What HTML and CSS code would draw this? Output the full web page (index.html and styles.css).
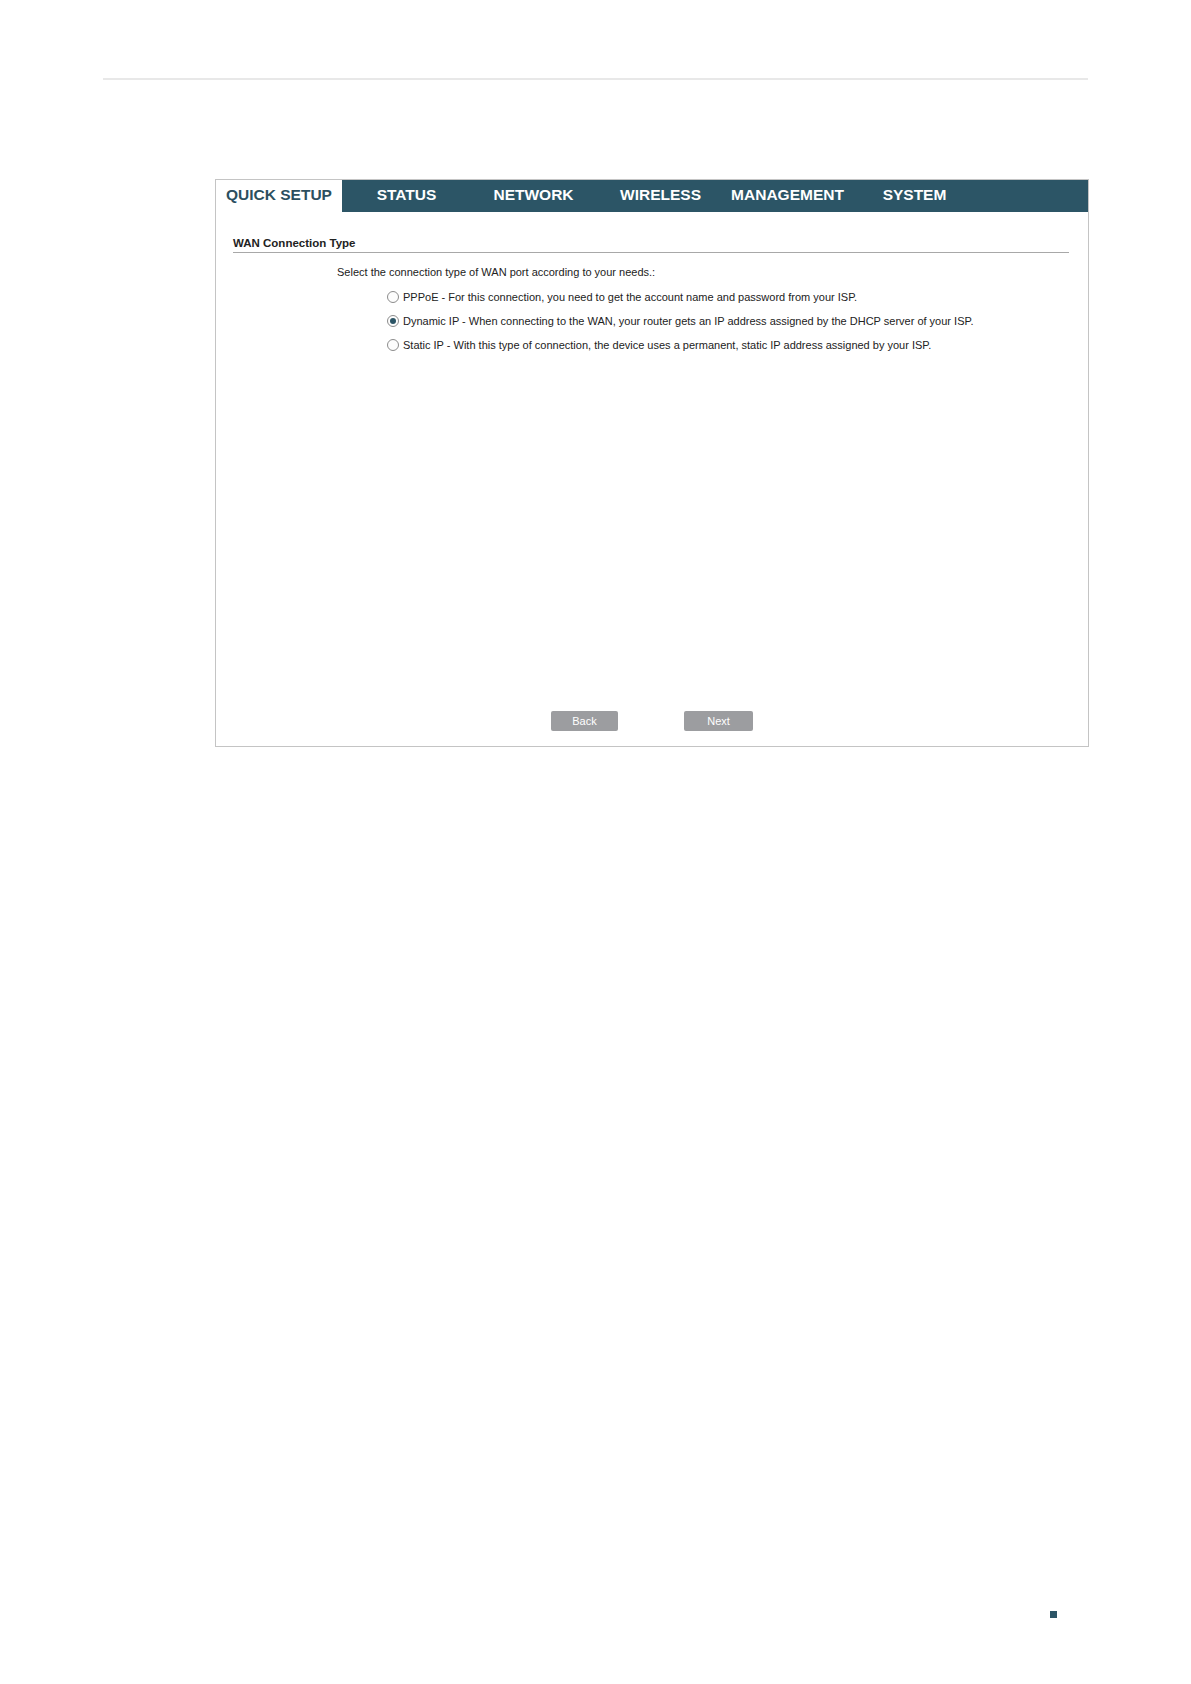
FILE: index.html
```html
<!DOCTYPE html>
<html>
<head>
<meta charset="utf-8">
<title>Quick Setup - WAN Connection Type</title>
<link rel="stylesheet" href="styles.css">
</head>
<body>
<div class="page">
  <div class="topline"></div>
  <div class="panel">
    <div class="nav">
      <div class="tab active">QUICK SETUP</div>
      <div class="tab">STATUS</div>
      <div class="tab">NETWORK</div>
      <div class="tab">WIRELESS</div>
      <div class="tab">MANAGEMENT</div>
      <div class="tab">SYSTEM</div>
    </div>
    <div class="content">
      <div class="section-title">WAN Connection Type</div>
      <div class="intro">Select the connection type of WAN port according to your needs.:</div>
      <div class="options">
        <label class="option"><span class="radio"></span><span>PPPoE - For this connection, you need to get the account name and password from your ISP.</span></label>
        <label class="option"><span class="radio checked"></span><span>Dynamic IP - When connecting to the WAN, your router gets an IP address assigned by the DHCP server of your ISP.</span></label>
        <label class="option"><span class="radio"></span><span>Static IP - With this type of connection, the device uses a permanent, static IP address assigned by your ISP.</span></label>
      </div>
      <div class="spacer"></div>
      <div class="buttons">
        <div class="btn">Back</div>
        <div class="btn">Next</div>
      </div>
    </div>
  </div>
  <div class="page-mark"></div>
</div>
</body>
</html>
```
FILE: styles.css
```css
html, body {
  margin: 0;
  padding: 0;
  background: #ffffff;
}
.page {
  padding-top: 78px;
  font-family: "Liberation Sans", Arial, sans-serif;
  color: #222;
}
.topline {
  margin-left: 103px;
  width: 985px;
  height: 2px;
  background: #e8e8e8;
}
.panel {
  margin-top: 99px;
  margin-left: 215px;
  width: 874px;
  height: 568px;
  box-sizing: border-box;
  border: 1px solid #c4c4c4;
  display: flex;
  flex-direction: column;
}
.nav {
  display: flex;
  height: 32px;
  background: #2c5566;
}
.tab {
  width: 127px;
  display: flex;
  align-items: center;
  justify-content: center;
  padding: 0 0 2px 2px;
  box-sizing: border-box;
  color: #ffffff;
  font-weight: bold;
  font-size: 15.5px;
}
.tab.active {
  width: 126px;
  padding-left: 0;
  background: #ffffff;
  color: #2c4f5f;
}
.content {
  flex: 1;
  display: flex;
  flex-direction: column;
  padding: 0 19px 15px 17px;
}
.section-title {
  margin-top: 24px;
  font-size: 11.5px;
  font-weight: bold;
  line-height: 14px;
  padding-bottom: 2px;
  border-bottom: 1px solid #a8a8a8;
  color: #222;
}
.intro {
  margin-top: 12px;
  margin-left: 104px;
  font-size: 11px;
  line-height: 14px;
}
.options {
  display: flex;
  flex-direction: column;
  gap: 10px;
  margin-top: 11px;
  margin-left: 154px;
}
.option {
  display: flex;
  align-items: center;
  gap: 4px;
  font-size: 11px;
  line-height: 14px;
}
.radio {
  width: 10px;
  height: 10px;
  border: 1px solid #8c8c8c;
  border-radius: 50%;
  background: #fdfdfd;
  display: flex;
  align-items: center;
  justify-content: center;
}
.radio.checked::after {
  content: "";
  width: 6px;
  height: 6px;
  border-radius: 50%;
  background: #2c5566;
}
.spacer {
  flex: 1;
}
.buttons {
  display: flex;
  justify-content: center;
  gap: 66px;
  margin-right: -2px;
}
.btn {
  width: 67px;
  height: 20px;
  border-radius: 2px;
  background: #9c9da0;
  color: #ffffff;
  font-size: 11px;
  display: flex;
  align-items: center;
  justify-content: center;
}
.btn + .btn {
  width: 69px;
}
.page-mark {
  margin-top: 864px;
  margin-left: 1050px;
  width: 7px;
  height: 7px;
  background: #2c5566;
}
```
